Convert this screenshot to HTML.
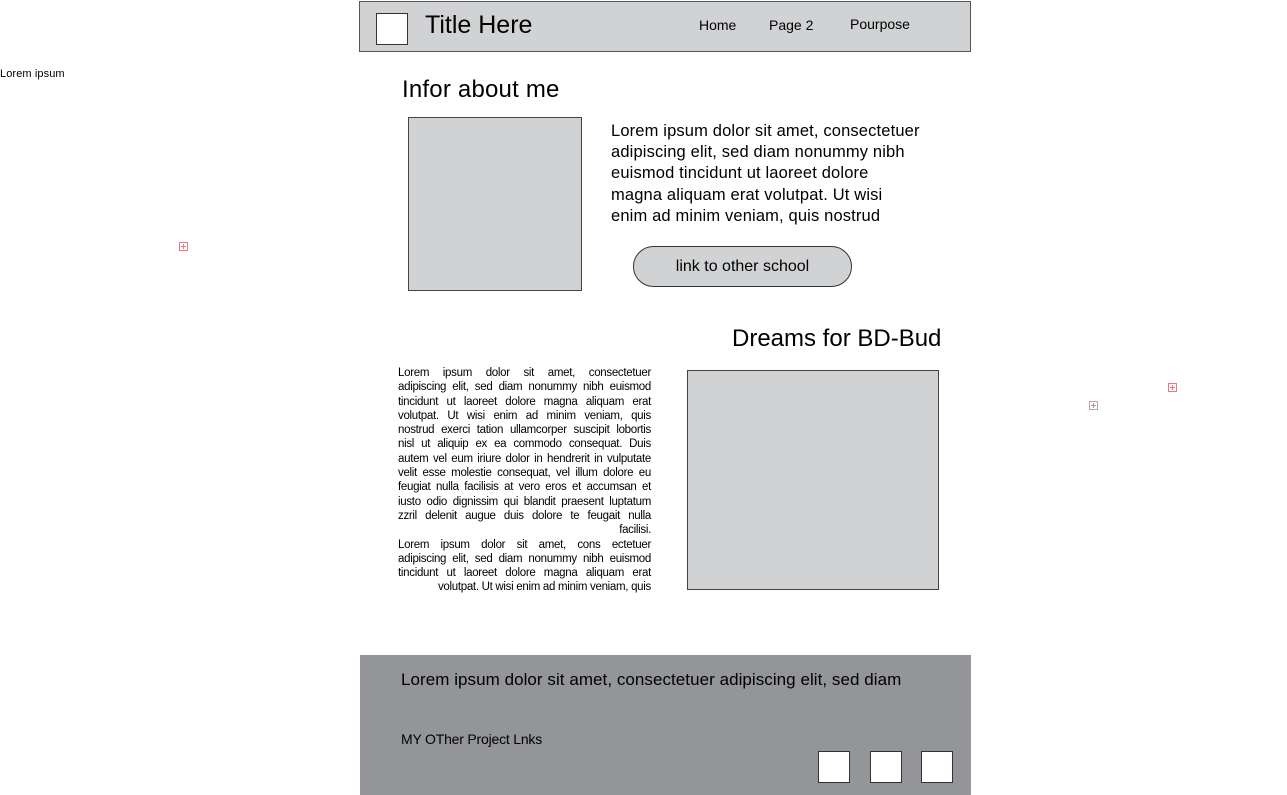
<!DOCTYPE html>
<html><head><meta charset="utf-8"><style>
*{margin:0;padding:0;box-sizing:border-box}
body{width:1287px;height:795px;position:relative;background:#fff;font-family:"Liberation Sans",sans-serif;color:#000;overflow:hidden}
.a{position:absolute;white-space:nowrap}
.j{position:absolute;left:398px;width:253px;font-size:11.5px;line-height:14.3px;}
.j div{text-align:justify;text-align-last:justify;white-space:nowrap;height:14.3px;letter-spacing:-0.3px}
.j div.r{text-align:right;text-align-last:right}
.ic{position:absolute;width:9px;height:9px;border:1px solid #e87a7f}
.ic:before{content:"";position:absolute;left:1px;top:3px;width:5px;height:1px;background:#e87a7f}
.ic:after{content:"";position:absolute;left:3px;top:1px;width:1px;height:5px;background:#e87a7f}
</style></head><body>
<div class="a" style="left:359px;top:1px;width:612px;height:51px;background:#d1d2d4;border:1px solid #555"></div>
<div class="a" style="left:376px;top:13px;width:32px;height:32px;background:#fff;border:1px solid #333"></div>
<div class="a" style="left:425px;top:11px;font-size:25px">Title Here</div>
<div class="a" style="left:699px;top:17px;font-size:14px">Home</div>
<div class="a" style="left:769px;top:17px;font-size:14px">Page 2</div>
<div class="a" style="left:850px;top:16px;font-size:14px">Pourpose</div>
<div class="a" style="left:0;top:68px;font-size:11px;letter-spacing:0.1px">Lorem ipsum</div>
<div class="ic" style="left:179px;top:242px"></div>
<div class="ic" style="left:1168px;top:383px"></div>
<div class="ic" style="left:1089px;top:401px;border-color:#aaa"></div>
<div class="a" style="left:402px;top:76px;font-size:24px;letter-spacing:0.2px">Infor about me</div>
<div class="a" style="left:408px;top:117px;width:174px;height:174px;background:#d1d2d4;border:1px solid #444"></div>
<div class="a" style="left:611px;top:121px;font-size:16.5px;line-height:21.2px;letter-spacing:0.15px">Lorem ipsum dolor sit amet, consectetuer<br>adipiscing elit, sed diam nonummy nibh<br>euismod tincidunt ut laoreet dolore<br>magna aliquam erat volutpat. Ut wisi<br>enim ad minim veniam, quis nostrud</div>
<div class="a" style="left:633px;top:246px;width:219px;height:41px;border-radius:21px;background:#d1d2d4;border:1px solid #333;font-size:16px;text-align:center;line-height:39px">link to other school</div>
<div class="a" style="left:732px;top:325px;font-size:24px;letter-spacing:0px">Dreams for BD-Bud</div>
<div class="j" style="top:366px">
<div>Lorem ipsum dolor sit amet, consectetuer</div>
<div>adipiscing elit, sed diam nonummy nibh euismod</div>
<div>tincidunt ut laoreet dolore magna aliquam erat</div>
<div>volutpat. Ut wisi enim ad minim veniam, quis</div>
<div>nostrud exerci tation ullamcorper suscipit lobortis</div>
<div>nisl ut aliquip ex ea commodo consequat. Duis</div>
<div>autem vel eum iriure dolor in hendrerit in vulputate</div>
<div>velit esse molestie consequat, vel illum dolore eu</div>
<div>feugiat nulla facilisis at vero eros et accumsan et</div>
<div>iusto odio dignissim qui blandit praesent luptatum</div>
<div>zzril delenit augue duis dolore te feugait nulla</div>
<div class="r">facilisi.</div>
<div>Lorem ipsum dolor sit amet, cons ectetuer</div>
<div>adipiscing elit, sed diam nonummy nibh euismod</div>
<div>tincidunt ut laoreet dolore magna aliquam erat</div>
<div class="r">volutpat. Ut wisi enim ad minim veniam, quis</div>
</div>
<div class="a" style="left:687px;top:370px;width:252px;height:220px;background:#d1d2d4;border:1px solid #444"></div>
<div class="a" style="left:360px;top:655px;width:611px;height:140px;background:#949598"></div>
<div class="a" style="left:401px;top:670px;font-size:17px;letter-spacing:0.05px">Lorem ipsum dolor sit amet, consectetuer adipiscing elit, sed diam</div>
<div class="a" style="left:401px;top:731px;font-size:14px;letter-spacing:-0.2px">MY OTher Project Lnks</div>
<div class="a" style="left:818px;top:751px;width:32px;height:32px;background:#fff;border:1px solid #333"></div>
<div class="a" style="left:870px;top:751px;width:32px;height:32px;background:#fff;border:1px solid #333"></div>
<div class="a" style="left:921px;top:751px;width:32px;height:32px;background:#fff;border:1px solid #333"></div>
</body></html>
